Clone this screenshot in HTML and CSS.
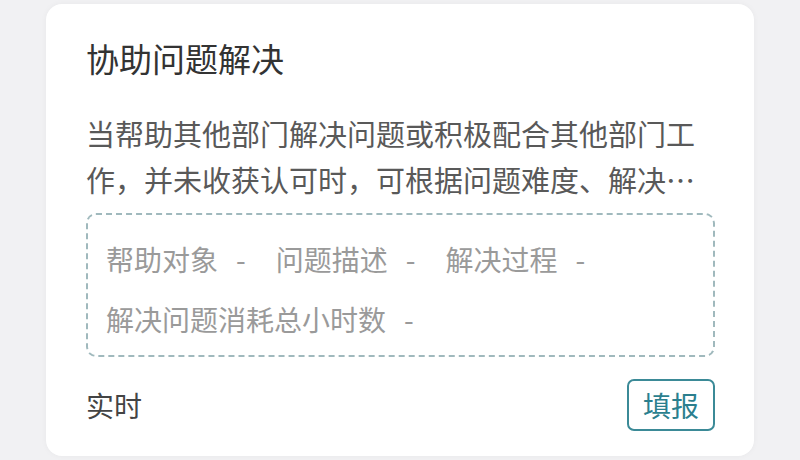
FILE: index.html
```html
<!DOCTYPE html>
<html lang="zh-CN">
<head>
  <meta charset="UTF-8">
  <meta name="viewport" content="width=device-width, initial-scale=1.0">
  <title>协助问题解决</title>
  <link rel="stylesheet" href="styles.css">
</head>
<body>
  <div class="card">
    <h1 class="title">协助问题解决</h1>
    <p class="desc">当帮助其他部门解决问题或积极配合其他部门工作，并未收获认可时，可根据问题难度、解决时长申请。</p>

    <div class="fields">
      <div class="row">
        <div class="field"><span class="label">帮助对象</span><span class="dash">-</span></div>
        <div class="field"><span class="label">问题描述</span><span class="dash">-</span></div>
        <div class="field"><span class="label">解决过程</span><span class="dash">-</span></div>
      </div>
      <div class="row">
        <div class="field"><span class="label">解决问题消耗总小时数</span><span class="dash">-</span></div>
      </div>
    </div>

    <div class="footer">
      <span class="mode">实时</span>
      <button class="fill-btn" type="button">填报</button>
    </div>
  </div>
</body>
</html>
```

FILE: styles.css
```css
html, body {
  margin: 0;
  padding: 0;
  height: 100%;
}
body {
  font-family: "Noto Sans CJK SC", "Noto Sans", sans-serif;
  background-color: #f1f1f3;
  box-sizing: border-box;
  padding: 4px 46px 4px 46px;
}
.card {
  background-color: #fff;
  border-radius: 16px;
  height: 100%;
  box-sizing: border-box;
  padding: 26px 39px 0 40px;
  box-shadow: 0 0 6px rgba(0, 0, 0, 0.04);
}
.title {
  margin: 0;
  font-size: 33px;
  font-weight: 400;
  line-height: 56px;
  color: #333;
}
.desc {
  margin: 24px 0 0 0;
  font-size: 29px;
  line-height: 46px;
  max-height: 92px;
  color: #595959;
  display: -webkit-box;
  -webkit-box-orient: vertical;
  -webkit-line-clamp: 2;
  overflow: hidden;
}
.fields {
  margin-top: 11px;
  border: 2px dashed #a0b9bd;
  border-radius: 10px;
  padding: 22px 18px 14px 18px;
  display: flex;
  flex-direction: column;
  gap: 16px;
}
.row {
  display: flex;
  gap: 30px;
}
.field {
  display: flex;
  gap: 18px;
  font-size: 28px;
  line-height: 44px;
  color: #9a9a9a;
  white-space: nowrap;
}
.footer {
  margin-top: 22px;
  display: flex;
  justify-content: space-between;
  align-items: center;
}
.mode {
  font-size: 28px;
  color: #444;
}
.fill-btn {
  font-family: inherit;
  font-size: 28px;
  line-height: 44px;
  padding: 2px 14px;
  color: #2b7f8e;
  background-color: #fff;
  border: 2px solid #3b8a97;
  border-radius: 7px;
  cursor: pointer;
}
```
